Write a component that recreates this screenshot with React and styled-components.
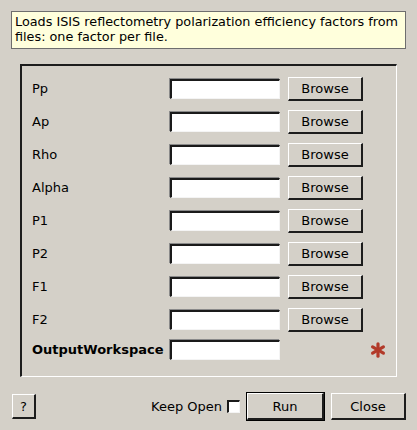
import React from 'react'
import styled, { createGlobalStyle } from 'styled-components'

const GlobalStyle = createGlobalStyle`
  html, body {
    margin: 0;
    padding: 0;
    background: #d4d0c8;
  }
  body {
    font-family: "DejaVu Sans", "Liberation Sans", sans-serif;
    font-size: 13px;
    color: #000;
  }
`

const Dialog = styled.div`
  width: 417px;
  height: 430px;
  box-sizing: border-box;
  padding: 11px 11px 0 11px;
  display: flex;
  flex-direction: column;
`

const Description = styled.div`
  box-sizing: border-box;
  height: 38px;
  background: #ffffdc;
  border: 1px solid #6e6e6e;
  padding: 2px 3px;
  line-height: 15px;
  font-size: 12.8px;
`

const Group = styled.div`
  box-sizing: border-box;
  margin: 15px 9px 0 9px;
  height: 313px;
  border-top: 2px solid #1c1c1c;
  border-left: 2px solid #1c1c1c;
  border-right: 1px solid #ffffff;
  border-bottom: 1px solid #ffffff;
  padding: 6px 0 0 10px;
  display: grid;
  grid-template-columns: 138px 110px 83px 1fr;
  grid-template-rows: repeat(8, 33px) 27px;
  align-items: center;
`

const Label = styled.div`
  font-weight: ${p => (p.$bold ? 'bold' : 'normal')};
  white-space: nowrap;
`

const Field = styled.div`
  box-sizing: border-box;
  width: 110px;
  height: 20px;
  background: #fff;
  border-top: 2px solid #1a1a1a;
  border-left: 2px solid #1a1a1a;
  border-right: 1px solid #f4f4f4;
  border-bottom: 1px solid #f4f4f4;
  box-shadow: -1px -1px 0 #8a8a8a;
`

const Cell = styled.div`
  display: flex;
  align-items: center;
  justify-content: ${p => p.$justify || 'flex-start'};
  padding-left: ${p => p.$pad || 0}px;
  padding-right: ${p => p.$padRight || 0}px;
`

const Button = styled.div`
  box-sizing: border-box;
  width: ${p => p.$w}px;
  height: ${p => p.$h}px;
  display: flex;
  align-items: center;
  justify-content: center;
  background: #d4d0c8;
  border-top: 1px solid #ffffff;
  border-left: 1px solid #ffffff;
  border-right: 2px solid #1c1c1c;
  border-bottom: 2px solid #1c1c1c;
  outline: ${p => (p.$default ? '1px solid #000' : 'none')};
  font-size: 13px;
  padding-top: 1px;
`

const Footer = styled.div`
  display: flex;
  align-items: center;
  margin-top: 16px;
  padding-left: 1px;
`

const Spacer = styled.div`
  flex: 1;
`

const KeepOpen = styled.div`
  display: flex;
  align-items: center;
  gap: 5px;
  margin-right: 7px;
`

const Check = styled.div`
  box-sizing: border-box;
  width: 13px;
  height: 13px;
  background: #fff;
  border-top: 2px solid #1a1a1a;
  border-left: 2px solid #1a1a1a;
  border-right: 1px solid #f4f4f4;
  border-bottom: 1px solid #f4f4f4;
`

const Asterisk = () => (
  <svg width="16" height="16" viewBox="0 0 16 16">
    <g stroke="#b23a2a" strokeWidth="3.2" strokeLinecap="round">
      <line x1="8" y1="1.8" x2="8" y2="14.2" />
      <line x1="2.6" y1="4.9" x2="13.4" y2="11.1" />
      <line x1="2.6" y1="11.1" x2="13.4" y2="4.9" />
    </g>
  </svg>
)

const files = ['Pp', 'Ap', 'Rho', 'Alpha', 'P1', 'P2', 'F1', 'F2']

export default function App() {
  return (
    <>
      <GlobalStyle />
      <Dialog>
        <Description>
          Loads ISIS reflectometry polarization efficiency factors from files: one factor per file.
        </Description>
        <Group>
          {files.map(name => (
            <React.Fragment key={name}>
              <Label>{name}</Label>
              <Field />
              <Cell $pad={8}>
                <Button $w={75} $h={24}>Browse</Button>
              </Cell>
              <div />
            </React.Fragment>
          ))}
          <Label $bold>OutputWorkspace</Label>
          <Field />
          <div />
          <Cell $justify="flex-end" $padRight={10}>
            <Asterisk />
          </Cell>
        </Group>
        <Footer>
          <Button $w={24} $h={25}>?</Button>
          <Spacer />
          <KeepOpen>
            Keep Open
            <Check />
          </KeepOpen>
          <Button $w={77} $h={27} $default>Run</Button>
          <Cell $pad={7}>
            <Button $w={75} $h={27}>Close</Button>
          </Cell>
        </Footer>
      </Dialog>
    </>
  )
}
